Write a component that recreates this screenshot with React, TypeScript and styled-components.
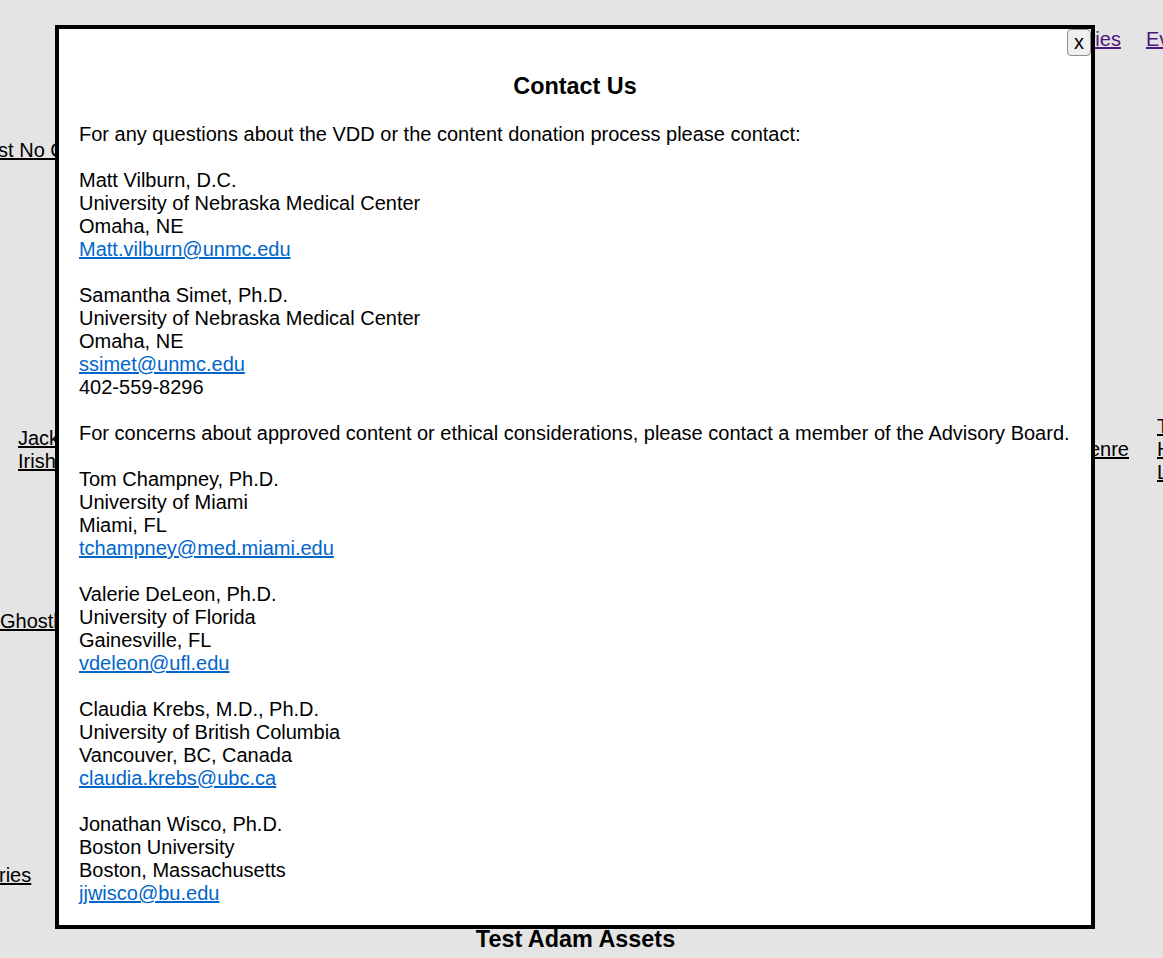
import React from 'react';
import styled, { createGlobalStyle } from 'styled-components';

const GlobalStyle = createGlobalStyle`
  html, body {
    margin: 0;
    padding: 0;
    overflow: hidden;
  }

  body {
    background: #ffffff;
    font-family: "Liberation Sans", Arial, sans-serif;
    font-size: 20px;
    line-height: 23px;
    color: #000000;
  }

  #root {
    overflow: visible;
  }
`;

const Page = styled.div`
  position: relative;
  margin: 8px;
  width: 1239px;
`;

const Header = styled.nav`
  display: flex;
  justify-content: flex-end;
  gap: 25px;
  width: 1323px;
  padding-top: 20px;
`;

const NavLink = styled.a`
  color: #551a8b;
  text-decoration: underline;
  white-space: nowrap;
`;

const Row = styled.div<{ $gap: number; $indent?: number }>`
  display: flex;
  align-items: center;
  gap: 28px;
  margin-top: ${p => p.$gap}px;
  margin-left: ${p => p.$indent ?? 0}px;
`;

const Tile = styled.a<{ $w?: number; $right?: boolean }>`
  display: block;
  color: #000000;
  text-decoration: underline;
  white-space: ${p => (p.$w ? 'normal' : 'nowrap')};
  width: ${p => (p.$w ? `${p.$w}px` : 'auto')};
  flex: ${p => (p.$right ? '1' : 'none')};
  text-align: ${p => (p.$right ? 'right' : 'left')};
`;

const Collection = styled.h3`
  margin: 39px 0 0;
  width: 1135px;
  text-align: center;
  font-size: 23.4px;
  line-height: 27px;
  font-weight: bold;
`;

const Overlay = styled.div`
  position: fixed;
  inset: 0;
  background: rgba(0, 0, 0, 0.105);
`;

const Modal = styled.div`
  position: absolute;
  left: 55px;
  top: 25px;
  width: 1040px;
  box-sizing: border-box;
  border: 4px solid #000000;
  background: #ffffff;
  padding: 20px;
`;

const CloseButton = styled.button`
  position: absolute;
  top: 0;
  right: 0;
  width: 24px;
  height: 27px;
  padding: 0;
  border: 1px solid #8f8f8f;
  border-radius: 4px;
  background: #efefef;
  color: #000000;
  font-family: "Liberation Sans", Arial, sans-serif;
  font-size: 20px;
  line-height: 23px;
`;

const Title = styled.h3`
  margin: 24px 0 23px;
  text-align: center;
  font-size: 23.4px;
  line-height: 27px;
  font-weight: bold;
`;

const Paragraph = styled.div`
  margin-bottom: 23px;

  &:last-child {
    margin-bottom: 0;
  }
`;

const Line = styled.div`
  white-space: nowrap;
`;

const Mail = styled.a`
  color: #0066cc;
  text-decoration: underline;
`;

interface Person {
  name: string;
  org: string;
  place: string;
  email: string;
  phone?: string;
}

const staff: Person[] = [
  {
    name: 'Matt Vilburn, D.C.',
    org: 'University of Nebraska Medical Center',
    place: 'Omaha, NE',
    email: 'Matt.vilburn@unmc.edu',
  },
  {
    name: 'Samantha Simet, Ph.D.',
    org: 'University of Nebraska Medical Center',
    place: 'Omaha, NE',
    email: 'ssimet@unmc.edu',
    phone: '402-559-8296',
  },
];

const board: Person[] = [
  {
    name: 'Tom Champney, Ph.D.',
    org: 'University of Miami',
    place: 'Miami, FL',
    email: 'tchampney@med.miami.edu',
  },
  {
    name: 'Valerie DeLeon, Ph.D.',
    org: 'University of Florida',
    place: 'Gainesville, FL',
    email: 'vdeleon@ufl.edu',
  },
  {
    name: 'Claudia Krebs, M.D., Ph.D.',
    org: 'University of British Columbia',
    place: 'Vancouver, BC, Canada',
    email: 'claudia.krebs@ubc.ca',
  },
  {
    name: 'Jonathan Wisco, Ph.D.',
    org: 'Boston University',
    place: 'Boston, Massachusetts',
    email: 'jjwisco@bu.edu',
  },
];

const Contact: React.FC<{ person: Person }> = ({ person }) => (
  <Paragraph>
    <Line>{person.name}</Line>
    <Line>{person.org}</Line>
    <Line>{person.place}</Line>
    <Line>
      <Mail href={`mailto:${person.email}`}>{person.email}</Mail>
    </Line>
    {person.phone && <Line>{person.phone}</Line>}
  </Paragraph>
);

const App: React.FC = () => {
  return (
    <>
      <GlobalStyle />
      <Page>
        <Header>
          <NavLink href="#">Home</NavLink>
          <NavLink href="#">Categories</NavLink>
          <NavLink href="#">Events</NavLink>
          <NavLink href="#">Contact Us</NavLink>
        </Header>

        <Row $gap={88} $indent={-31}>
          <Tile href="#">Test No Category</Tile>
        </Row>
        <Row $gap={253} $indent={10}>
          <Tile href="#" $w={90}>Jackson Irish Folk</Tile>
          <Tile href="#" $right>Test Genre</Tile>
          <Tile href="#" $w={90}>Test Horror Legends</Tile>
        </Row>
        <Row $gap={126} $indent={-8}>
          <Tile href="#">Ghostbusters</Tile>
        </Row>
        <Row $gap={231} $indent={-39}>
          <Tile href="#">Stories</Tile>
        </Row>

        <Collection>Test Adam Assets</Collection>
      </Page>

      <Overlay>
        <Modal>
          <CloseButton>x</CloseButton>
          <Title>Contact Us</Title>
          <Paragraph>
            For any questions about the VDD or the content donation process please contact:
          </Paragraph>
          {staff.map(p => (
            <Contact key={p.email} person={p} />
          ))}
          <Paragraph>
            For concerns about approved content or ethical considerations, please contact a member of the Advisory Board.
          </Paragraph>
          {board.map(p => (
            <Contact key={p.email} person={p} />
          ))}
        </Modal>
      </Overlay>
    </>
  );
};

export default App;
